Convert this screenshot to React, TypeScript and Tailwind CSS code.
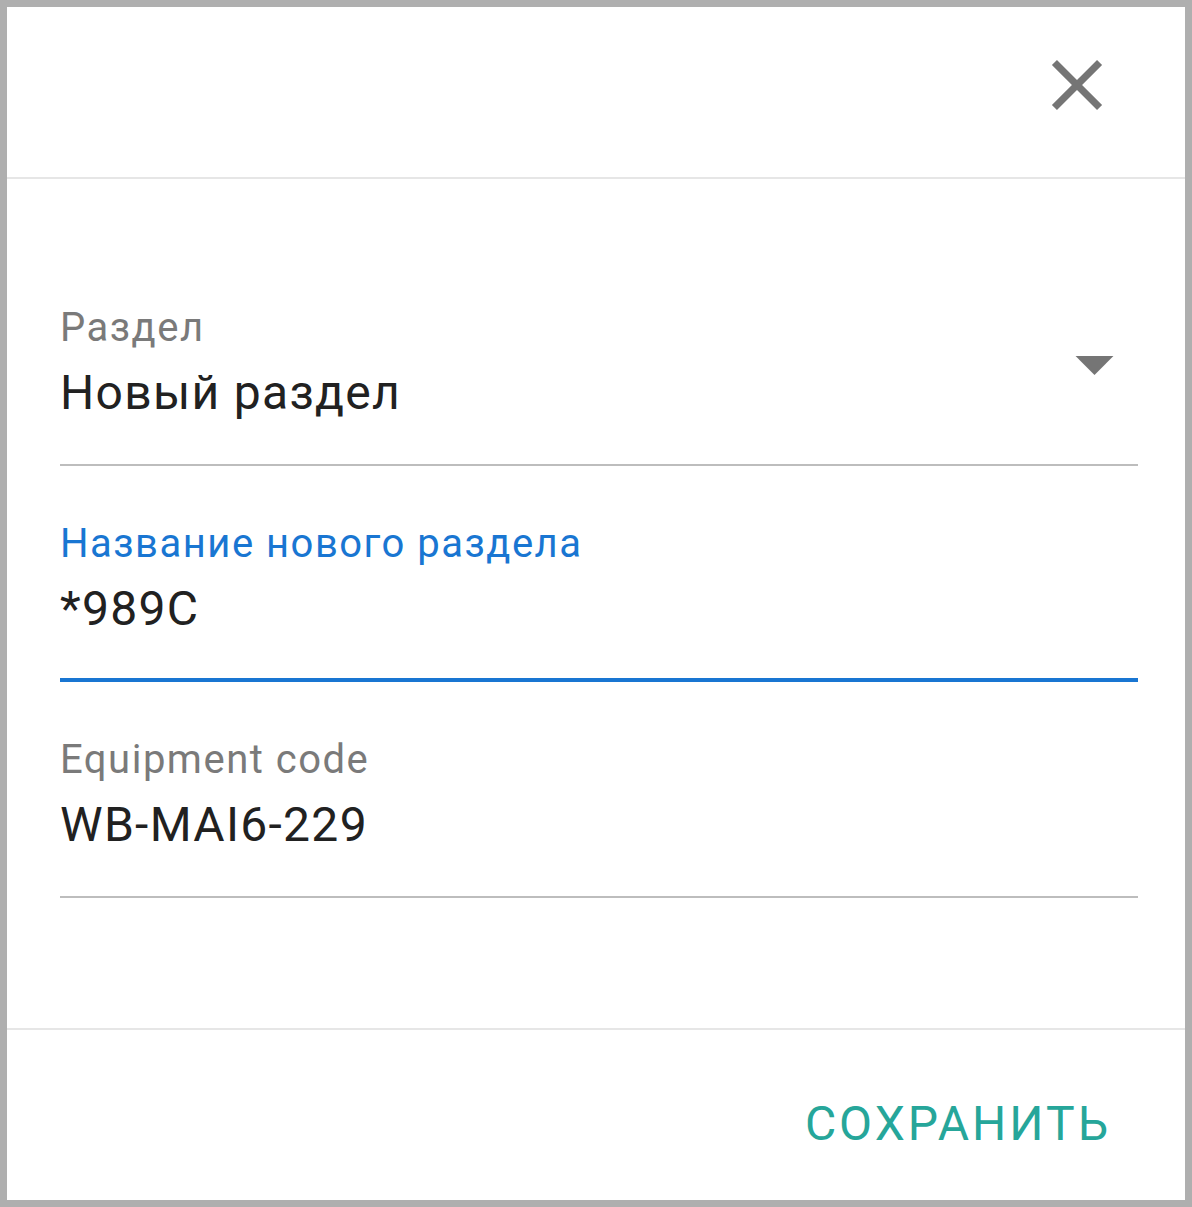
import React from "react";

type FieldProps = {
  label: string;
  value: string;
  focused?: boolean;
  select?: boolean;
};

function CloseIcon() {
  return (
    <svg viewBox="0 0 24 24" className="h-[86px] w-[86px]" fill="#757575">
      <path d="M19 6.41L17.59 5 12 10.59 6.41 5 5 6.41 10.59 12 5 17.59 6.41 19 12 13.41 17.59 19 19 17.59 13.41 12z" />
    </svg>
  );
}

function ArrowDropDown() {
  return (
    <svg viewBox="0 0 24 24" className="h-[91px] w-[91px]" fill="#757575">
      <path d="M7 10l5 5 5-5z" />
    </svg>
  );
}

function Field({ label, value, focused, select }: FieldProps) {
  return (
    <div className="relative flex flex-col">
      <div
        className={`text-[40px] leading-none tracking-[1.5px] ${
          focused ? "text-[#1976d2]" : "text-[#7a7a7a]"
        }`}
      >
        {label}
      </div>
      <div className="mt-[21px] text-[48px] leading-none tracking-[1.3px] text-[#212121]">
        {value}
      </div>
      {focused ? (
        <div className="mt-[45px] h-[4px] bg-[#1976d2]" />
      ) : (
        <div className="mt-[47px] h-[2px] bg-[#bdbdbd]" />
      )}
      {select && (
        <div className="absolute right-[-2px] top-[10px]">
          <ArrowDropDown />
        </div>
      )}
    </div>
  );
}

export default function App() {
  return (
    <div
      className="h-[1207px] w-[1192px] bg-[#afafaf] p-[7px]"
      style={{ fontFamily: "Roboto, 'Noto Sans', sans-serif" }}
    >
      <div className="flex h-full w-full flex-col bg-white">
        <div className="flex h-[170px] items-center justify-end pb-[14px] pr-[65px]">
          <CloseIcon />
        </div>
        <div className="h-[2px] bg-[#e6e6e6]" />

        <div className="flex flex-col gap-[58px] pl-[53px] pr-[47px] pt-[129px]">
          <Field label="Раздел" value="Новый раздел" select />
          <Field label="Название нового раздела" value="*989C" focused />
          <Field label="Equipment code" value="WB-MAI6-229" />
        </div>

        <div className="mt-[130px] h-[2px] bg-[#e6e6e6]" />
        <div className="flex flex-1 items-center justify-end pr-[74px] pt-[17px]">
          <button className="text-[48px] leading-none tracking-[3px] text-[#26a69a]">
            СОХРАНИТЬ
          </button>
        </div>
      </div>
    </div>
  );
}
